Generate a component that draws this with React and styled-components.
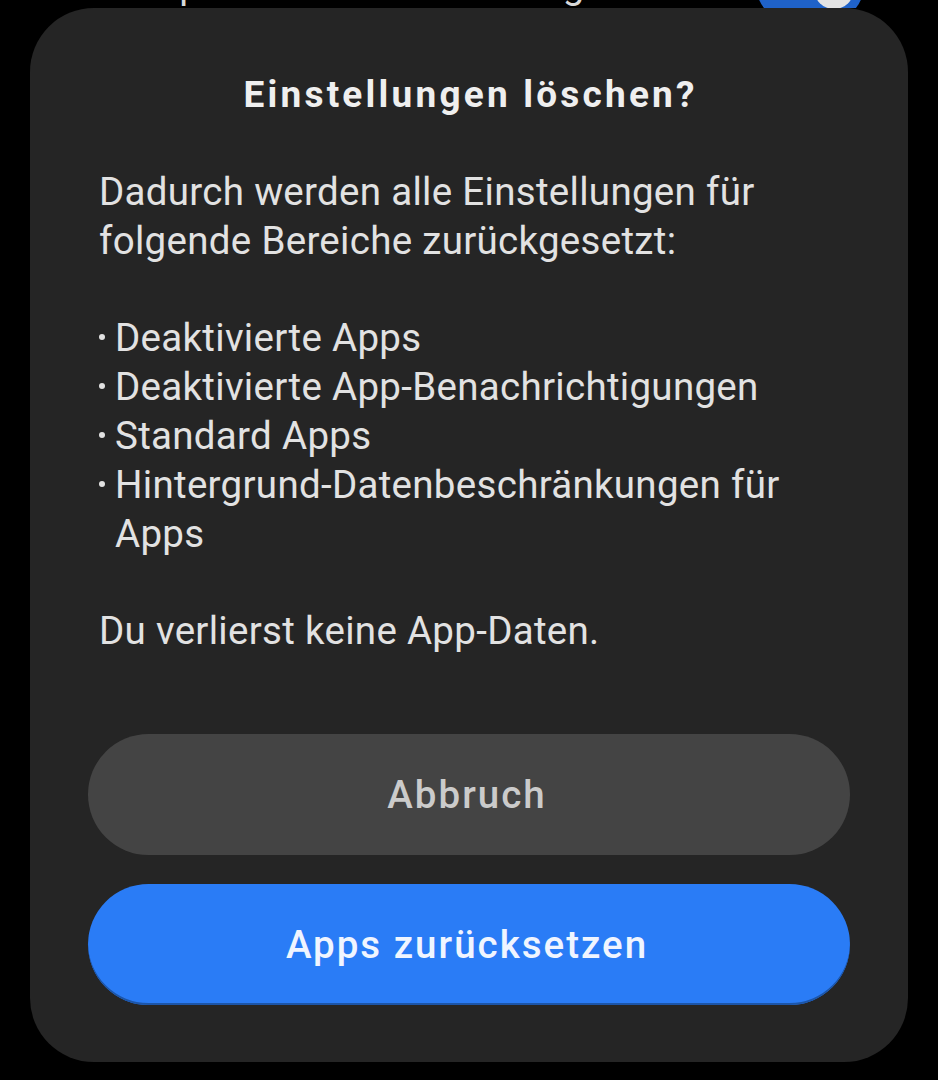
import React from 'react';
import styled, { createGlobalStyle } from 'styled-components';

const GlobalStyle = createGlobalStyle`
  html, body {
    margin: 0;
    padding: 0;
    background: #000;
  }
  body {
    font-family: Roboto, "Noto Sans", "Liberation Sans", sans-serif;
    -webkit-font-smoothing: antialiased;
  }
`;

const Screen = styled.div`
  width: 938px;
  height: 1080px;
  background: #000;
  overflow: hidden;
`;

/* the settings row behind the dialog, almost hidden above the top edge */
const BehindRow = styled.div`
  height: 8px;
  position: relative;
  overflow: hidden;
`;

const BehindText = styled.div`
  position: absolute;
  left: 99px;
  bottom: 2px;
  font-size: 38.5px;
  line-height: 1;
  letter-spacing: 0.3px;
  color: #d8d8d8;
  white-space: nowrap;
  transform: translateY(-2px);
`;

const Toggle = styled.div`
  position: absolute;
  left: 757px;
  bottom: -10px;
  width: 106px;
  height: 58px;
  border-radius: 29px;
  background: #1f62c9;

  &::after {
    content: '';
    position: absolute;
    right: 9px;
    top: 9px;
    width: 40px;
    height: 40px;
    border-radius: 50%;
    background: #e4e4e4;
  }
`;

const Dialog = styled.div`
  margin: 0 30px;
  height: 1054px;
  box-sizing: border-box;
  background: #252525;
  border-radius: 64px;
  padding: 59px 58px 0 58px;
  display: flex;
  flex-direction: column;
`;

const Title = styled.h1`
  margin: 0;
  padding-left: 3.2px;
  text-align: center;
  font-size: 37px;
  font-weight: 700;
  line-height: 56px;
  letter-spacing: 3.2px;
  color: #efefef;
`;

const Body = styled.div`
  margin-top: 45px;
  padding: 0 11px;
  font-size: 38.5px;
  line-height: 48.8px;
  letter-spacing: 0.3px;
  color: #e2e2e2;
`;

const Para = styled.p`
  margin: 0;
`;

const BulletList = styled.ul`
  list-style: none;
  margin: 48.8px 0;
  padding: 0;
`;

const Bullet = styled.li`
  position: relative;
  padding-left: 16px;

  &::before {
    content: '';
    position: absolute;
    left: 0;
    top: 20px;
    width: 6px;
    height: 6px;
    border-radius: 50%;
    background: #e2e2e2;
  }
`;

const Actions = styled.div`
  margin-top: 78px;
  display: flex;
  flex-direction: column;
  gap: 29px;
`;

const Button = styled.button`
  height: 121px;
  border: none;
  border-radius: 61px;
  font-family: inherit;
  font-size: 38.5px;
  font-weight: 500;
  letter-spacing: 2px;
  padding-left: 2px;
  background: ${p => (p.$primary ? '#2a7cf6' : '#444444')};
  color: ${p => (p.$primary ? '#f0f5ff' : '#cbcbcb')};
  box-shadow: ${p => (p.$primary ? 'inset 0 -2px 0 #1c55a8' : 'none')};
  cursor: pointer;
`;

const items = [
  'Deaktivierte Apps',
  'Deaktivierte App-Benachrichtigungen',
  'Standard Apps',
  'Hintergrund-Datenbeschränkungen für Apps',
];

export default function App() {
  return (
    <Screen>
      <GlobalStyle />
      <BehindRow>
        <BehindText>Kompakte Bildschirmanzeige</BehindText>
        <Toggle />
      </BehindRow>
      <Dialog>
        <Title>Einstellungen löschen?</Title>
        <Body>
          <Para>Dadurch werden alle Einstellungen für folgende Bereiche zurückgesetzt:</Para>
          <BulletList>
            {items.map(item => (
              <Bullet key={item}>{item}</Bullet>
            ))}
          </BulletList>
          <Para>Du verlierst keine App-Daten.</Para>
        </Body>
        <Actions>
          <Button>Abbruch</Button>
          <Button $primary>Apps zurücksetzen</Button>
        </Actions>
      </Dialog>
    </Screen>
  );
}
